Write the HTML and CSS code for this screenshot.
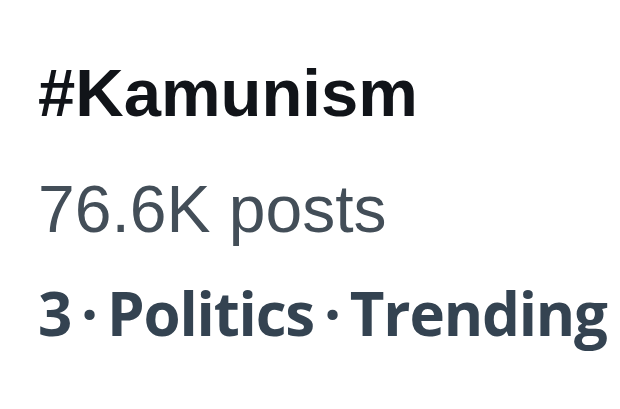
FILE: index.html
```html
<!DOCTYPE html>
<html>
<head>
  <title>Trend</title>
  <link rel="stylesheet" href="styles.css">
</head>
<body>
    <div class="trend">
        <div class="trend-name">#Kamunism</div>
        <div class="trend-count">76.6K posts</div>
        <div class="trend-meta">3<span class="dot">·</span>Politics<span class="dot">·</span>Trending</div>
    </div>
</body>
</html>
```

FILE: styles.css
```css
body {
    margin: 0;
    background-color: #fff;
}

.trend {
    display: flex;
    flex-direction: column;
    padding: 55px 0 0 38px;
}

.trend-name {
    font-family: "Liberation Sans", Arial, sans-serif;
    font-weight: bold;
    font-size: 67px;
    line-height: 76px;
    color: #111419;
}

.trend-count {
    font-family: "Liberation Sans", Arial, sans-serif;
    font-size: 66px;
    line-height: 76px;
    margin-top: 40px;
    color: #434e58;
}

.trend-meta {
    font-family: "Open Sans", sans-serif;
    font-weight: 700;
    font-size: 60px;
    letter-spacing: -1.2px;
    line-height: 76px;
    margin-top: 28px;
    color: #344351;
}

.trend-meta .dot {
    margin: 0 10px;
}
```
